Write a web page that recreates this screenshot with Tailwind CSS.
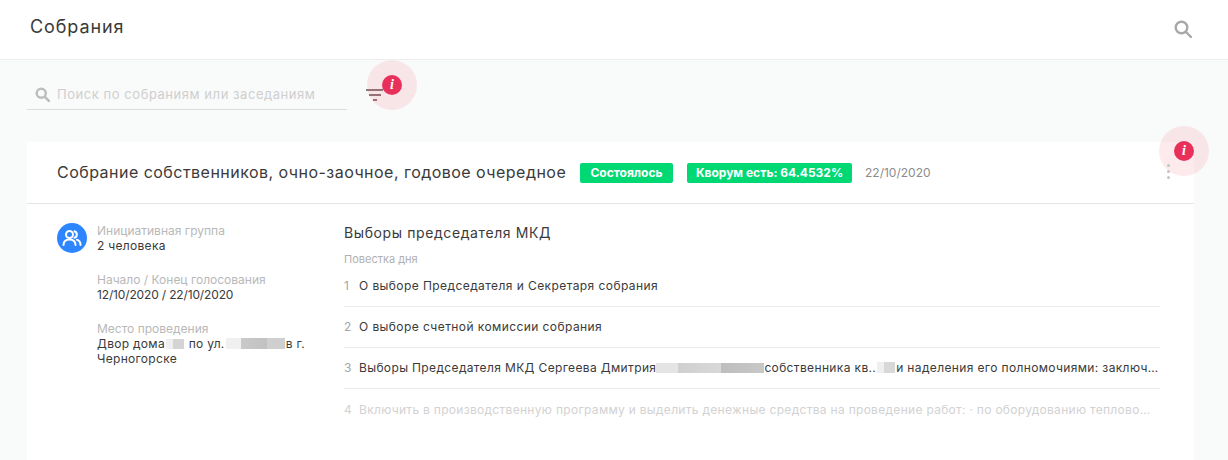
<!DOCTYPE html>
<html lang="ru"><head><meta charset="utf-8"><script src="https://cdn.jsdelivr.net/npm/@tailwindcss/browser@4"></script></head>
<body class="w-[1228px] h-[460px] overflow-hidden bg-[#f9fafa] font-['Inter','Liberation_Sans',sans-serif] text-[#3a3a3a] relative">
<header class="h-[60px] bg-white border-b border-[#eeeeee] flex items-center justify-between pl-[30px] pr-[36px]">
  <h1 class="text-[18px] leading-[26px] tracking-[0.9px] text-[#3a3a3a] font-normal -mt-[6px]">Собрания</h1>
  <svg class="w-[18px] h-[18px] -mt-[2px]" viewBox="0 0 18 18" fill="none" stroke="#a8a8a8" stroke-width="2.4"><circle cx="7.5" cy="7.5" r="5.8"/><path d="M12 12l5 5" stroke-linecap="round"/></svg>
</header>
<div class="pl-[27px] pt-[20px] flex items-start">
  <div class="w-[320px] h-[30px] border-b border-[#dddddd] flex items-center pl-[8px] gap-[7px]">
    <svg class="w-[15px] h-[15px]" viewBox="0 0 18 18" fill="none" stroke="#bdbdbd" stroke-width="3"><circle cx="7.5" cy="7.5" r="5.5"/><path d="M12 12l5 5" stroke-linecap="round"/></svg>
    <span class="text-[13px] text-[#cfcfcf] tracking-[0.55px]">Поиск по собраниям или заседаниям</span>
  </div>
  <svg class="ml-[19px] mt-[9px] w-[17px] h-[12px]" viewBox="0 0 17 12" fill="#8d7a7d"><rect x="0" y="0" width="17" height="2"/><rect x="3" y="5" width="12" height="2"/><rect x="7" y="10" width="4" height="2"/></svg>
</div>
<main class="mx-[27px] mt-[32px] w-[1167px] h-[320px] bg-white">
  <div class="h-[62px] border-b border-[#e5e5e5] pl-[30px] flex items-center">
    <h2 class="text-[16px] text-[#3a3a3a] font-normal w-[523px] whitespace-nowrap tracking-[0.47px] -mt-[1px]">Собрание собственников, очно-заочное, годовое очередное</h2>
    <span class="h-[20px] w-[93px] rounded-[2px] bg-[#00d873] text-white text-[12px] font-bold flex items-center justify-center">Состоялось</span>
    <span class="ml-[14px] h-[20px] w-[165px] rounded-[2px] bg-[#00d873] text-white text-[12px] font-bold flex items-center justify-center">Кворум есть: 64.4532%</span>
    <span class="ml-[13px] text-[12px] text-[#8c8c8c]">22/10/2020</span>
  </div>
  <div class="flex pl-[30px] pt-[19px]">
    <div class="w-[287px] flex gap-[10px]">
      <div class="w-[30px] h-[30px] rounded-full bg-[#2e86ff] flex items-center justify-center shrink-0">
        <svg class="w-[20px] h-[20px]" viewBox="0 0 20 20" fill="none" stroke="#fff" stroke-width="2" stroke-linecap="round"><circle cx="7.5" cy="6.5" r="3.5"/><path d="M1.5 17c0-3.5 2.5-5.5 6-5.5s6 2 6 5.5"/><path d="M12.5 3.2a3.5 3.5 0 0 1 0 6.6M15 11.8c2.2.7 3.5 2.6 3.5 5.2"/></svg>
      </div>
      <div class="text-[12px] leading-[15px] w-[212px] -mt-[1px]">
        <div class="text-[#b8b8b8] pt-[1px]">Инициативная группа</div>
        <div class="tracking-[0.3px]">2 человека</div>
        <div class="text-[#b8b8b8] mt-[19px]">Начало / Конец голосования</div>
        <div class="text-[12px] tracking-[-0.15px]">12/10/2020 / 22/10/2020</div>
        <div class="text-[#b8b8b8] mt-[19px]">Место проведения</div>
        <div class="tracking-[0.3px] leading-[15px]">Двор дома<span class="inline-block w-[18px] h-[10px] mx-[1px] bg-[linear-gradient(90deg,#efefef_40%,#d4d4d4_40%)] align-[-1px]"></span> по ул.<span class="inline-block w-[59px] h-[11px] mx-[1px] bg-[linear-gradient(90deg,#f0f0f0_25%,#c9c9c9_25%,#c2c2c2_70%,#cfcfcf_70%)] align-[-1px]"></span>в г.<br>Черногорске</div>
      </div>
    </div>
    <div class="w-[816px]">
      <h3 class="text-[14px] leading-[20px] tracking-[0.6px] font-normal">Выборы председателя МКД</h3>
      <div class="mt-[9px] text-[11px] leading-[14px] text-[#b0b0b0]">Повестка дня</div>
      <ol class="text-[12px] tracking-[0.42px]">
        <li class="h-[41px] border-b border-[#eaeaea] flex items-center gap-[9px]"><span class="text-[#a6a6a6] w-[6px]">1</span><span>О выборе Председателя и Секретаря собрания</span></li>
        <li class="h-[41px] border-b border-[#eaeaea] flex items-center gap-[9px]"><span class="text-[#a6a6a6] w-[6px]">2</span><span>О выборе счетной комиссии собрания</span></li>
        <li class="h-[41px] border-b border-[#eaeaea] flex items-center gap-[9px]"><span class="text-[#a6a6a6] w-[6px]">3</span><span class="whitespace-nowrap tracking-[0.36px]">Выборы Председателя МКД Сергеева Дмитрия<span class="inline-block w-[108px] h-[10px] bg-[linear-gradient(90deg,#e4e4e4_20%,#d0d0d0_20%,#d8d8d8_60%,#bdbdbd_60%,#c8c8c8_100%)] align-[-1px]"></span>собственника кв..<span class="inline-block w-[18px] h-[11px] mx-[1px] bg-[linear-gradient(90deg,#efefef_40%,#d8d8d8_40%)] align-[-1px]"></span>и наделения его полномочиями: заключ…</span></li>
        <li class="h-[41px] flex items-center gap-[9px] text-[#d2d2d2]"><span class="w-[6px]">4</span><span class="whitespace-nowrap tracking-[0.3px]">Включить в производственную программу и выделить денежные средства на проведение работ: · по оборудованию теплово…</span></li>
      </ol>
    </div>
  </div>
</main>
<div class="absolute left-[367px] top-[60px] w-[50px] h-[50px] rounded-full bg-[#e8304f]/10 flex items-center justify-center"><span class="w-[20px] h-[20px] rounded-full bg-[#e8315a] text-white text-[14px] leading-[20px] font-bold italic text-center font-['Liberation_Serif',serif]">i</span></div>
<div class="absolute left-[1159px] top-[126px] w-[50px] h-[50px] rounded-full bg-[#e8304f]/10 flex items-center justify-center"><span class="w-[20px] h-[20px] rounded-full bg-[#e8315a] text-white text-[14px] leading-[20px] font-bold italic text-center font-['Liberation_Serif',serif]">i</span></div>
<div class="absolute left-[1167px] top-[164px] flex flex-col gap-[3px]"><span class="w-[3px] h-[3px] rounded-full bg-[#c4c4c4]"></span><span class="w-[3px] h-[3px] rounded-full bg-[#c4c4c4]"></span><span class="w-[3px] h-[3px] rounded-full bg-[#c4c4c4]"></span></div>
</body></html>
